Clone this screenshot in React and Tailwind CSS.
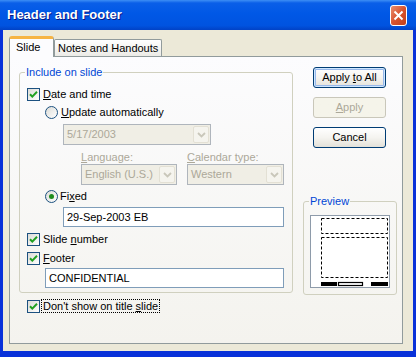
import React from "react";

function Check({ checked }) {
  return (
    <span className="w-[13px] h-[13px] shrink-0 border border-[#1C5180] bg-gradient-to-br from-[#DCDCD7] to-white flex items-center justify-center">
      {checked && (
        <svg width="11" height="11" viewBox="0 0 11 11">
          <path d="M2 5.2 L4.3 7.6 L9 2.8" stroke="#21A121" strokeWidth="2" fill="none" />
        </svg>
      )}
    </span>
  );
}

function Radio({ checked }) {
  return (
    <span className="w-[13px] h-[13px] shrink-0 rounded-full border border-[#1C5180] bg-gradient-to-br from-[#DCDCD7] to-white flex items-center justify-center">
      {checked && <span className="w-[5px] h-[5px] rounded-full bg-[#1F8C1F]" />}
    </span>
  );
}

function Chevron({ color }) {
  return (
    <svg width="9" height="6" viewBox="0 0 9 6">
      <path d="M1 1 L4.5 4.5 L8 1" stroke={color} strokeWidth="1.8" fill="none" />
    </svg>
  );
}

function DisabledCombo({ value, className }) {
  return (
    <div className={`flex items-center h-[21px] border border-[#AFB5BC] bg-[#F0EEE5] ${className}`}>
      <span className="flex-1 pl-[3px] text-[#ACA899]">{value}</span>
      <span className="w-[16px] h-[17px] mr-[1px] rounded-[2px] border border-[#E3E0D4] bg-[#F5F4EE] flex items-center justify-center">
        <Chevron color="#C9C7BA" />
      </span>
    </div>
  );
}

function Button({ children, primary, disabled }) {
  return (
    <div
      className={`w-[73px] h-[21px] rounded-[3px] border flex items-center justify-center bg-gradient-to-b ${
        disabled
          ? "border-[#C9C7BA] from-[#F5F4EA] to-[#F5F4EA] text-[#ACA899]"
          : "border-[#003C74] from-white via-[#F5F4F0] to-[#E3E1D9] text-black"
      } ${primary ? "shadow-[inset_0_0_0_1px_#CEE7FF,inset_0_0_0_2px_#98B8EA]" : ""}`}
    >
      <span>{children}</span>
    </div>
  );
}

export default function App() {
  return (
    <div className="w-[416px] h-[357px] flex flex-col bg-[#0831D9] font-['Liberation_Sans',Arial,sans-serif] text-[11px] leading-[13px] text-black overflow-hidden">
      {/* title bar */}
      <div className="h-[30px] shrink-0 flex items-center justify-between pl-[7px] pr-[9px] bg-[linear-gradient(180deg,#3D8FF5_0%,#0A5FE8_10%,#0058E6_45%,#0053E0_85%,#0142C6_100%)]">
        <span className="text-white font-bold text-[13px] leading-[16px] [text-shadow:1px_1px_#0A1883]">
          Header and Footer
        </span>
        <div className="w-[17px] h-[21px] mt-[1px] rounded-[3px] border border-white bg-gradient-to-br from-[#E98D6E] via-[#D8532E] to-[#C2401C] flex items-center justify-center">
          <svg width="11" height="11" viewBox="0 0 11 11">
            <path d="M1.5 1.5 L9.5 9.5 M9.5 1.5 L1.5 9.5" stroke="white" strokeWidth="2" />
          </svg>
        </div>
      </div>

      {/* body */}
      <div className="flex-1 mx-[3px] mb-[6px] bg-[#ECE9D8] pt-[6px] flex flex-col">
        {/* tabs */}
        <div className="h-[20px] flex items-end ml-[6px]">
          <div className="relative z-10 h-[21px] w-[45px] -mb-[1px] rounded-t-[3px] border-x border-t-[3px] border-x-[#919B9C] border-t-[#F6B443] bg-[#FCFCFE] pl-[6px] pt-[2px]">
            Slide
          </div>
          <div className="h-[17px] px-[3px] rounded-t-[2px] border-x border-t border-[#919B9C] bg-gradient-to-b from-white to-[#ECEBE6] flex items-center">
            Notes and Handouts
          </div>
        </div>

        {/* panel */}
        <div className="ml-[6px] w-[394px] h-[288px] border border-[#919B9C] bg-gradient-to-b from-[#FCFCFE] to-[#F4F3EE] flex items-start">
          {/* left column */}
          <div className="ml-[9px] mt-[9px] w-[274px] flex flex-col">
            <fieldset className="h-[227px] min-w-0 border border-[#D0D0BF] rounded-[3px] flex flex-col">
              <legend className="ml-[5px] px-[1px] text-[#0046D5] leading-[13px]">Include on slide</legend>

              <div className="mt-[9px] ml-[7px] h-[13px] flex items-center gap-[3px]">
                <Check checked />
                <span>
                  <u>D</u>ate and time
                </span>
              </div>

              <div className="mt-[5px] ml-[25px] h-[13px] flex items-center gap-[3px]">
                <Radio />
                <span>
                  <u>U</u>pdate automatically
                </span>
              </div>

              <DisabledCombo value="5/17/2003" className="mt-[5px] ml-[43px] w-[148px]" />

              <div className="mt-[6px] ml-[61px] flex text-[#ACA899]">
                <span className="w-[106px]">
                  <u>L</u>anguage:
                </span>
                <span>
                  <u>C</u>alendar type:
                </span>
              </div>

              <div className="ml-[61px] flex gap-[10px]">
                <DisabledCombo value="English (U.S.)" className="w-[96px]" />
                <DisabledCombo value="Western" className="w-[97px]" />
              </div>

              <div className="mt-[5px] ml-[25px] h-[13px] flex items-center gap-[2px]">
                <Radio checked />
                <span>
                  Fi<u>x</u>ed
                </span>
              </div>

              <div className="mt-[4px] ml-[43px] w-[221px] h-[20px] border border-[#7F9DB9] bg-white pl-[3px] flex items-center">
                29-Sep-2003 EB
              </div>

              <div className="mt-[6px] ml-[7px] h-[13px] flex items-center gap-[3px]">
                <Check checked />
                <span>
                  Slide <u>n</u>umber
                </span>
              </div>

              <div className="mt-[6px] ml-[7px] h-[13px] flex items-center gap-[3px]">
                <Check checked />
                <span>
                  <u>F</u>ooter
                </span>
              </div>

              <div className="mt-[3px] ml-[25px] w-[239px] h-[20px] border border-[#7F9DB9] bg-white pl-[3px] flex items-center">
                CONFIDENTIAL
              </div>
            </fieldset>

            <div className="mt-[6px] ml-[8px] h-[14px] flex items-center gap-[1px]">
              <Check checked />
              <span className="border border-dotted border-black px-[1px] leading-[12px]">
                Don't show on title <u>s</u>lide
              </span>
            </div>
          </div>

          {/* right column */}
          <div className="ml-[10px] w-[94px] flex flex-col">
            <div className="mt-[10px] ml-[10px] flex flex-col gap-[9px]">
              <Button primary>
                Apply <u>t</u>o All
              </Button>
              <Button disabled>
                <u>A</u>pply
              </Button>
              <Button>Cancel</Button>
            </div>

            <fieldset className="mt-[47px] h-[100px] min-w-0 border border-[#D0D0BF] rounded-[3px] flex flex-col">
              <legend className="ml-[5px] px-[1px] text-[#0046D5] leading-[13px]">Preview</legend>
              <div className="mt-[7px] ml-[6px] w-[80px] h-[73px] border border-[#8E9BAA] bg-white">
                <svg width="78" height="71" viewBox="0 0 78 71">
                  <rect x="10.5" y="2.5" width="66" height="15" fill="none" stroke="black" strokeDasharray="3 2" />
                  <rect x="10.5" y="21.5" width="66" height="40" fill="none" stroke="black" strokeDasharray="3 2" />
                  <rect x="10" y="66" width="16" height="4" fill="black" />
                  <rect x="27.5" y="66.5" width="24" height="3" fill="none" stroke="black" strokeWidth="1.2" />
                  <rect x="60" y="66" width="17" height="4" fill="black" />
                </svg>
              </div>
            </fieldset>
          </div>
        </div>
      </div>
    </div>
  );
}
